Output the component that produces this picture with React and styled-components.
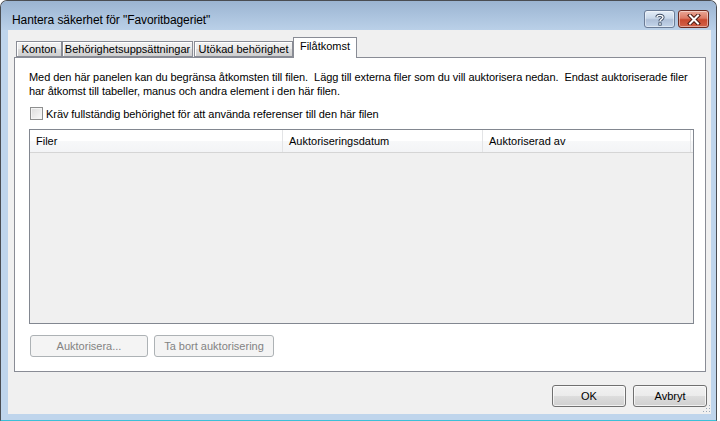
import React from "react";
import styled, { createGlobalStyle } from "styled-components";

const UI_FONT = `"Liberation Sans", Arial, sans-serif`;

const GlobalStyle = createGlobalStyle`
  html, body {
    margin: 0;
    padding: 0;
    background: #ffffff;
  }
  body {
    width: 720px;
    height: 421px;
    overflow: hidden;
  }
`;

const Window = styled.div`
  position: relative;
  box-sizing: border-box;
  width: 717px;
  height: 421px;
  border: 1px solid #4a4d52;
  border-bottom-color: #3cbfd7;
  border-radius: 7px 7px 0 0;
  background: #bfd5ec;
  display: flex;
  flex-direction: column;
  font-family: ${UI_FONT};
  font-size: 11px;
  color: #000;
`;

const TitleBar = styled.div`
  height: 29px;
  flex: none;
  display: flex;
  align-items: flex-start;
  padding: 0 7px 0 11px;
  border-radius: 6px 6px 0 0;
  background: linear-gradient(#9bb4d1 0%, #a9c1dc 45%, #bad0e8 100%);
`;

const Title = styled.div`
  margin-top: 12px;
  font-size: 12px;
  line-height: 14px;
  letter-spacing: -0.08px;
  color: #000;
`;

const Caption = styled.div`
  margin-left: auto;
  margin-top: 9px;
  display: flex;
  gap: 3px;
`;

const CaptionButton = styled.div`
  box-sizing: border-box;
  width: 31px;
  height: 18px;
  border-radius: 3px;
  display: flex;
  align-items: center;
  justify-content: center;
  border: 1px solid ${(p) => (p.$close ? "#6b2a20" : "#6a7b96")};
  background: ${(p) =>
    p.$close
      ? "linear-gradient(#eaa796 0%, #dc7a64 45%, #c9492f 55%, #d2624a 100%)"
      : "linear-gradient(#e4edf7 0%, #c9d8ea 45%, #aebfd8 55%, #c3d4e9 100%)"};
  box-shadow: inset 0 0 0 1px rgba(255, 255, 255, 0.45);
`;

const Frame = styled.div`
  flex: 1;
  min-width: 0;
  display: flex;
  padding: 0 5px 7px 7px;
`;

const Client = styled.div`
  flex: 1;
  min-width: 0;
  display: flex;
  flex-direction: column;
  background: #f0f0f0;
  padding-top: 7px;
`;

const TabStrip = styled.div`
  height: 20px;
  display: flex;
  align-items: flex-end;
  padding-left: 8px;
  position: relative;
  z-index: 1;
`;

const Tab = styled.div`
  box-sizing: border-box;
  width: ${(p) => p.$w}px;
  margin-left: ${(p) => p.$ml || 0}px;
  height: ${(p) => (p.$active ? 21 : 16)}px;
  margin-bottom: ${(p) => (p.$active ? -1 : 0)}px;
  border: 1px solid #898c95;
  border-bottom: ${(p) => (p.$active ? "none" : "1px solid #898c95")};
  background: ${(p) =>
    p.$active ? "#ffffff" : "linear-gradient(#f2f2f2 0%, #ebebeb 50%, #dddddd 51%, #cfcfcf 100%)"};
  box-shadow: ${(p) => (p.$active ? "none" : "inset 1px 1px 0 #ffffff")};
  display: flex;
  justify-content: center;
  align-items: ${(p) => (p.$active ? "flex-start" : "center")};
  padding-top: ${(p) => (p.$active ? 2 : 0)}px;
  white-space: nowrap;
  line-height: 13px;
`;

const Panel = styled.div`
  flex: 1;
  min-width: 0;
  margin: 0 5px 0 6px;
  background: #ffffff;
  border: 1px solid #898c95;
  display: flex;
  flex-direction: column;
  padding: 12px 11px 14px 14px;
`;

const Intro = styled.p`
  margin: 0;
  line-height: 14px;
  letter-spacing: -0.06px;
`;

const CheckRow = styled.label`
  margin-top: 9px;
  height: 13px;
  display: flex;
  align-items: center;
  gap: 3px;
  padding-left: 1px;
  white-space: nowrap;
  letter-spacing: -0.06px;
`;

const CheckBox = styled.span`
  box-sizing: border-box;
  width: 13px;
  height: 13px;
  border: 1px solid #8e8f8f;
  background: linear-gradient(135deg, #dcdcdc 0%, #f4f4f4 80%, #fdfdfd 100%);
  box-shadow: inset 0 0 0 1px #f4f4f4;
`;

const List = styled.div`
  margin-top: 9px;
  height: 195px;
  box-sizing: border-box;
  border: 1px solid #828790;
  background: #f0f0f0;
  display: flex;
  flex-direction: column;
`;

const ListHeader = styled.div`
  height: 23px;
  box-sizing: border-box;
  display: flex;
  background: linear-gradient(#ffffff 0%, #ffffff 50%, #f7f8f9 51%, #f3f4f6 100%);
  border-bottom: 1px solid #d5d5d5;
`;

const Column = styled.div`
  box-sizing: border-box;
  width: ${(p) => p.$w}px;
  border-right: 1px solid #e3e4e6;
  padding-left: 6px;
  display: flex;
  align-items: center;
  white-space: nowrap;
`;

const ActionRow = styled.div`
  margin-top: 11px;
  display: flex;
  gap: 6px;
  padding-left: 1px;
`;

const Button = styled.button`
  box-sizing: border-box;
  width: ${(p) => p.$w}px;
  height: 22px;
  padding: 0;
  font-family: ${UI_FONT};
  font-size: 11px;
  border-radius: 3px;
  border: 1px solid ${(p) => (p.disabled ? "#adb2b5" : "#707070")};
  color: ${(p) => (p.disabled ? "#838383" : "#000000")};
  background: ${(p) =>
    p.disabled
      ? "#f4f4f4"
      : "linear-gradient(#f2f2f2 0%, #ebebeb 50%, #dddddd 51%, #cfcfcf 100%)"};
  box-shadow: ${(p) => (p.disabled ? "none" : "inset 0 0 0 1px rgba(255,255,255,0.7)")};
`;

const Footer = styled.div`
  display: flex;
  justify-content: flex-end;
  gap: 7px;
  padding: 13px 4px 7px 0;
`;

const Grip = styled.svg`
  position: absolute;
  right: 5px;
  bottom: 7px;
`;

const tabs = [
  { label: "Konton", w: 46 },
  { label: "Behörighetsuppsättningar", w: 131 },
  { label: "Utökad behörighet", w: 99, ml: 1 },
  { label: "Filåtkomst", w: 64, active: true },
];

const HelpIcon = () => (
  <svg width="12" height="13" viewBox="0 0 12 13">
    <path
      d="M3 4.2 C3 1.8 9 1.6 9 4.3 C9 6.2 6 6.4 6 8.2"
      fill="none"
      stroke="#3d4c63"
      strokeWidth="3.2"
    />
    <path
      d="M3 4.2 C3 1.8 9 1.6 9 4.3 C9 6.2 6 6.4 6 8.2"
      fill="none"
      stroke="#ffffff"
      strokeWidth="1.4"
    />
    <rect x="4.4" y="9.4" width="3.2" height="3.2" fill="#3d4c63" />
    <rect x="5.2" y="10.2" width="1.6" height="1.6" fill="#ffffff" />
  </svg>
);

const CloseIcon = () => (
  <svg width="14" height="11" viewBox="0 0 14 11">
    <path d="M3 1.5 L11 9.5 M11 1.5 L3 9.5" stroke="#4a1a12" strokeWidth="4" strokeLinecap="square" />
    <path d="M3 1.5 L11 9.5 M11 1.5 L3 9.5" stroke="#ffffff" strokeWidth="2" strokeLinecap="square" />
  </svg>
);

const App = () => {
  return (
    <>
      <GlobalStyle />
      <Window>
        <TitleBar>
          <Title>Hantera säkerhet för "Favoritbageriet"</Title>
          <Caption>
            <CaptionButton>
              <HelpIcon />
            </CaptionButton>
            <CaptionButton $close>
              <CloseIcon />
            </CaptionButton>
          </Caption>
        </TitleBar>
        <Frame>
          <Client>
            <TabStrip>
              {tabs.map((t) => (
                <Tab key={t.label} $w={t.w} $ml={t.ml} $active={t.active}>
                  {t.label}
                </Tab>
              ))}
            </TabStrip>
            <Panel>
              <Intro>
                Med den här panelen kan du begränsa åtkomsten till filen.&nbsp; Lägg till externa filer
                som du vill auktorisera nedan.&nbsp; Endast auktoriserade filer har åtkomst till tabeller,
                manus och andra element i den här filen.
              </Intro>
              <CheckRow>
                <CheckBox />
                Kräv fullständig behörighet för att använda referenser till den här filen
              </CheckRow>
              <List>
                <ListHeader>
                  <Column $w={253}>Filer</Column>
                  <Column $w={200}>Auktoriseringsdatum</Column>
                  <Column $w={208}>Auktoriserad av</Column>
                </ListHeader>
              </List>
              <ActionRow>
                <Button $w={118} disabled>
                  Auktorisera...
                </Button>
                <Button $w={120} disabled>
                  Ta bort auktorisering
                </Button>
              </ActionRow>
            </Panel>
            <Footer>
              <Button $w={74}>OK</Button>
              <Button $w={74}>Avbryt</Button>
            </Footer>
          </Client>
        </Frame>
        <Grip width="9" height="9" viewBox="0 0 9 9">
          {[
            [7, 1],
            [7, 4],
            [4, 4],
            [7, 7],
            [4, 7],
            [1, 7],
          ].map(([x, y]) => (
            <rect key={`${x}-${y}`} x={x} y={y} width="1" height="1" fill="#9aa7b6" />
          ))}
        </Grip>
      </Window>
    </>
  );
};

export default App;
